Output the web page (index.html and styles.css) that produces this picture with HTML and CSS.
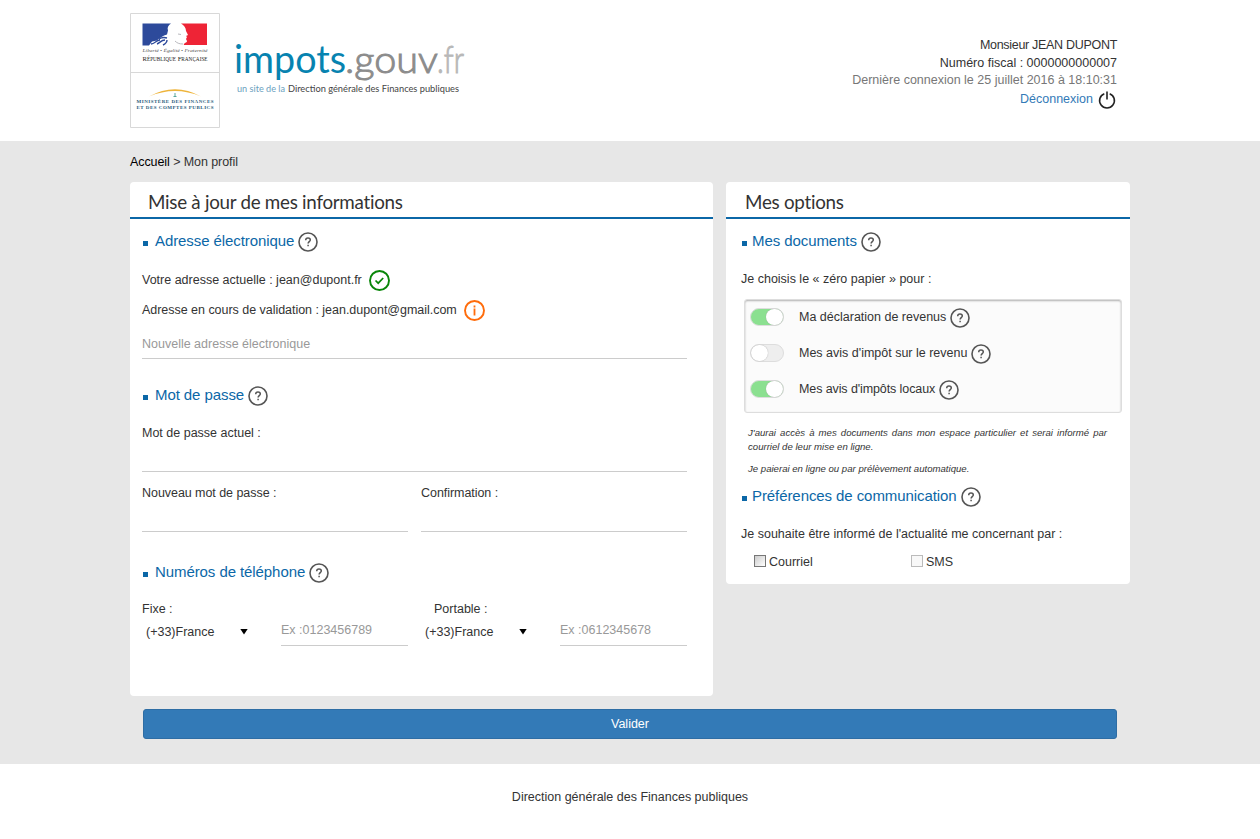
FILE: index.html
```html
<!DOCTYPE html>
<html lang="fr">
<head>
<meta charset="utf-8">
<title>Mon profil</title>
<link rel="stylesheet" href="styles.css">
</head>
<body>
<svg class="defs" width="0" height="0">
  <symbol id="help" viewBox="0 0 20 20"><circle cx="10" cy="10" r="9" fill="none" stroke="#555" stroke-width="1.600"/><path d="M7.700 8.200C7.700 6.700 8.700 6 10 6s2.300.8 2.300 2c0 1.600-2.200 1.700-2.200 3.500M10.100 12.800v1.500" fill="none" stroke="#555" stroke-width="1.500"/></symbol>
</svg>
<header class="header"><div class="wrap head-row">
  <div class="brand">
    <svg class="emblem" viewBox="0 0 90 115">
      <path d="M.5.5h89v114H.5zM.5 59.500h89" fill="#fff" stroke="#d8d8d8"/>
      <path d="M12.500 10.500H41c-3 2-4 4-3 7l-1 4c-4 1-8 4-10 6l-5 1-3 4h-6.500z" fill="#2d4a9b"/>
      <path d="M51 10.500h26v21.500H54c-1-2 3-2 3-4l-1-2 1-2-1-1 2-1-2-4c0-3-2-6-5-7.500z" fill="#ee2436"/>
      <path d="M21 31c4 0 5-4 9-4M27 31c3-1 4-4 8-4M29 26c3-2 5-2 8-1M33 32c2-1 4-3 4-5" fill="none" stroke="#2d4a9b" stroke-width="1.400"/>
      <path d="M48 21l3 .5M45 28c2 2 4 3 8 3" fill="none" stroke="#b9b9be"/>
      <text x="12.500" y="38.800" class="motto" textLength="65" lengthAdjust="spacingAndGlyphs">Liberté • Égalité • Fraternité</text>
      <text x="12.500" y="47.500" class="repub" textLength="65" lengthAdjust="spacingAndGlyphs">R<tspan class="sc">ÉPUBLIQUE</tspan> F<tspan class="sc">RANÇAISE</tspan></text>
      <path d="M19 83.500Q45 69 71 83.500Q45 72.500 19 83.500z" fill="#eeb43b"/>
      <path d="M45 80v4M43.500 83.500h3" stroke="#5aa79c" stroke-width="1"/>
      <text x="6.500" y="90.300" class="minis" textLength="77" lengthAdjust="spacing">MINISTÈRE DES FINANCES</text>
      <text x="6.500" y="96.300" class="minis" textLength="77" lengthAdjust="spacing">ET DES COMPTES PUBLICS</text>
    </svg>
    <svg class="wordmark" viewBox="0 0 230 80">
      <text x="-1" y="43" class="logo blue" textLength="112" lengthAdjust="spacingAndGlyphs">impots</text>
      <text x="110" y="43" class="logo grey" textLength="93" lengthAdjust="spacingAndGlyphs">.gouv</text>
      <text x="202" y="43" class="logo light" textLength="27" lengthAdjust="spacingAndGlyphs">.fr</text>
      <text x="2" y="62" class="tag tagblue" textLength="48" lengthAdjust="spacingAndGlyphs">un site de la</text>
      <text x="53" y="62" class="tag" textLength="171" lengthAdjust="spacingAndGlyphs">Direction générale des Finances publiques</text>
    </svg>
  </div>
  <div class="user">
    <div class="name">Monsieur JEAN DUPONT</div>
    <div class="fiscal">Numéro fiscal : 0000000000007</div>
    <div class="last">Dernière connexion le 25 juillet 2016 à 18:10:31</div>
    <a class="logout"><span>Déconnexion</span><svg width="18" height="20" viewBox="0 0 18 20"><path d="M6.300 3.700a7.400 7.400 0 1 0 5.400 0M9 1.500v8" fill="none" stroke="#222" stroke-width="1.600"/></svg></a>
  </div>
</div></header>
<main class="main"><div class="wrap">
  <nav class="crumb"><a>Accueil</a> &gt; <span>Mon profil</span></nav>
  <div class="cards">
    <section class="card left">
      <h1>Mise à jour de mes informations</h1>
      <div class="body">
        <h2 class="first"><span>Adresse électronique</span><svg class="help"><use href="#help"/></svg></h2>
        <div class="info current"><span>Votre adresse actuelle : jean@dupont.fr</span><svg class="status" viewBox="0 0 21 21"><circle cx="10.500" cy="10.500" r="9.500" fill="none" stroke="#098609" stroke-width="1.900"/><path d="M6.500 10.500l2.700 2.700 5-5.200" fill="none" stroke="#098609" stroke-width="1.700"/></svg></div>
        <div class="info pending"><span>Adresse en cours de validation : jean.dupont@gmail.com</span><svg class="status" viewBox="0 0 21 21"><circle cx="10.500" cy="10.500" r="9.500" fill="none" stroke="#ff6c0b" stroke-width="1.900"/><path d="M10.500 5.500v2M10.500 8.500v7" stroke="#ff6c0b" stroke-width="1.800"/></svg></div>
        <div class="field mail">Nouvelle adresse électronique</div>
        <h2 class="password"><span>Mot de passe</span><svg class="help"><use href="#help"/></svg></h2>
        <div class="label">Mot de passe actuel :</div>
        <div class="field"></div>
        <div class="pair">
          <div><div class="label">Nouveau mot de passe :</div><div class="field"></div></div>
          <div><div class="label">Confirmation :</div><div class="field"></div></div>
        </div>
        <h2 class="phone"><span>Numéros de téléphone</span><svg class="help"><use href="#help"/></svg></h2>
        <div class="pair phones">
          <div><div class="label">Fixe :</div><div class="tel"><span class="select"><span>(+33)France</span><i class="arrow"></i></span><div class="field">Ex :0123456789</div></div></div>
          <div><div class="label mobile">Portable :</div><div class="tel"><span class="select"><span>(+33)France</span><i class="arrow"></i></span><div class="field">Ex :0612345678</div></div></div>
        </div>
      </div>
    </section>
    <section class="card right">
      <h1>Mes options</h1>
      <div class="body">
        <h2 class="first"><span>Mes documents</span><svg class="help"><use href="#help"/></svg></h2>
        <div class="label choose">Je choisis le « zéro papier » pour :</div>
        <div class="options">
          <div class="option"><i class="switch on"></i><span>Ma déclaration de revenus</span><svg class="help"><use href="#help"/></svg></div>
          <div class="option"><i class="switch"></i><span>Mes avis d'impôt sur le revenu</span><svg class="help"><use href="#help"/></svg></div>
          <div class="option local"><i class="switch on"></i><span>Mes avis d'impôts locaux</span><svg class="help"><use href="#help"/></svg></div>
        </div>
        <div class="notes"><p>J'aurai accès à mes documents dans mon espace particulier et serai informé par courriel de leur mise en ligne.</p><p>Je paierai en ligne ou par prélèvement automatique.</p></div>
        <h2 class="prefs"><span>Préférences de communication</span><svg class="help"><use href="#help"/></svg></h2>
        <div class="label wish">Je souhaite être informé de l'actualité me concernant par :</div>
        <div class="checks"><label><i class="box dark"></i>Courriel</label><label><i class="box"></i>SMS</label></div>
      </div>
    </section>
  </div>
  <button class="submit">Valider</button>
</div></main>
<footer class="footer">Direction générale des Finances publiques</footer>
</body>
</html>
```
FILE: styles.css
```css
* { box-sizing: border-box; }
body { margin: 0; background: #fff; color: #333; font: 12.5px/18px "Liberation Sans", Arial, sans-serif; }
h1, h2, p { margin: 0; font-weight: 400; }
.defs { display: block; height: 0; }
.wrap { width: 1001px; margin-left: 130px; }
.header { height: 141px; }
.head-row { display: flex; justify-content: space-between; padding: 13px 14px 0 0; }
.brand { display: flex; }
.emblem { width: 90px; height: 115px; }
.wordmark { width: 230px; height: 80px; margin: 17px 0 0 15px; overflow: visible; }
.motto { font: italic 5px "Liberation Serif", serif; fill: #555; }
.repub { font: 7px "Liberation Serif", serif; fill: #222; }
.sc { font-size: 5.5px; }
.minis { font: bold 5px "Liberation Serif", serif; fill: #285b7b; }
.logo { font: 38px Lato, sans-serif; }
.blue { fill: #0783b0; }
.grey { fill: #8c8c8c; font-weight: 300; stroke: #8c8c8c; stroke-width: 1px; }
.light { fill: #b8b8b8; font-weight: 300; stroke: #b8b8b8; stroke-width: 1px; }
.tag { font: 9px Lato, sans-serif; fill: #444; }
.tagblue { fill: #6b9fc0; }
.user { padding-top: 24px; text-align: right; line-height: 17.600px; }
.name { letter-spacing: -.3px; }
.last { color: #777; }
.logout { display: flex; justify-content: flex-end; align-items: center; gap: 5px; color: #337ab7; height: 20px; }
.logout svg { margin-right: 1px; }
.main { height: 623px; background: #e7e7e7; }
.crumb { height: 41px; padding-top: 12px; letter-spacing: -.08px; }
.crumb a { color: #000; }
.cards { display: flex; align-items: flex-start; gap: 13px; height: 527px; }
.card { background: #fff; border-radius: 4px; }
.left { width: 583px; height: 514px; }
.right { width: 404px; height: 402px; }
.card h1 { height: 37px; padding: 2px 0 0 18px; border-bottom: 2px solid #0b67a7; font: 18.800px/36px Lato, sans-serif; letter-spacing: -.27px; font-variant-ligatures: none; color: #333; }
.right h1 { padding-left: 19px; }
.left .body { padding: 0 26px 0 12px; }
.right .body { padding: 0 9px 0 15px; }
h2 { display: flex; align-items: center; height: 44px; color: #0b67a7; font-size: 15px; letter-spacing: -.08px; }
h2::before { content: ""; width: 5px; height: 5px; margin: 3px 7px 0 1px; background: #0b67a7; }
.right h2::before { margin-right: 5px; }
h2.first { height: 46px; }
h2 span { margin-bottom: 2px; }
.help { width: 20px; height: 20px; margin-left: 5px; flex: none; }
h2 .help { margin-left: 4px; }
.info { display: flex; align-items: center; height: 30px; }
.pending span { letter-spacing: -.03px; }
.status { width: 21px; height: 21px; margin-left: 7px; }
.field { height: 24px; border-bottom: 1px solid #ccc; color: #999; }
.field.mail { height: 34px; padding-top: 10px; }
.password { margin-top: 15px; }
.label { height: 30px; line-height: 30px; }
.pair { display: grid; grid-template-columns: 266px 266px; gap: 13px; margin-top: 6px; letter-spacing: -.05px; }
.phone { margin-top: 19px; }
.phones { margin-top: 2px; letter-spacing: 0; }
.phones .label { height: 24px; line-height: 24px; }
.phones .mobile { padding-left: 13px; }
.tel { display: flex; justify-content: space-between; }
.tel .field { width: 127px; height: 25px; }
.select { display: flex; align-items: center; width: 106px; height: 21px; justify-content: space-between; padding-left: 4px; }
.arrow { width: 8px; height: 6px; background: #000; clip-path: polygon(0 0, 100% 0, 50% 100%); }
.choose { height: 34px; line-height: 28px; }
.options { width: 378px; height: 114px; margin-left: 3px; background: #fbfbfb; border: 1px solid #ddd; border-radius: 3px; box-shadow: inset 0 1px 2px rgba(0,0,0,.3); }
.option { display: flex; align-items: center; height: 36px; padding-left: 5px; }
.option span { margin-bottom: 2px; }
.option .help { margin-left: 4px; }
.local span { letter-spacing: -.1px; }
.switch { display: flex; width: 34px; height: 18px; margin: 0 15px 2px 0; border: 1px solid #ddd; border-radius: 9px; background: #eee; }
.switch::before { content: ""; width: 17px; height: 16px; border-radius: 8px; background: #fff; box-shadow: 0 0 1px #999; }
.switch.on { justify-content: flex-end; background: #8be090; }
.notes { height: 62px; padding: 13px 14px 0 7px; font: italic 9.600px/14px "Liberation Sans", sans-serif; text-align: justify; }
.notes p + p { margin-top: 8px; }
.prefs { height: 44px; }
.wish { height: 32px; }
.checks { display: flex; padding-left: 13px; }
.checks label { display: flex; align-items: center; width: 157px; height: 22px; }
.box { width: 12px; height: 12px; margin: -3px 3px 0 0; border: 1px solid #bbb; background: #f8f8f8; }
.box.dark { border-color: #777; background: linear-gradient(135deg, #ccc, #fff); }
.submit { display: block; width: 974px; height: 30px; margin-left: 13px; border: 1px solid #2e6da4; border-radius: 3px; background: #337ab7; color: #fff; font: 12.500px "Liberation Sans", sans-serif; }
.footer { height: 75px; padding-top: 24px; text-align: center; }
```
